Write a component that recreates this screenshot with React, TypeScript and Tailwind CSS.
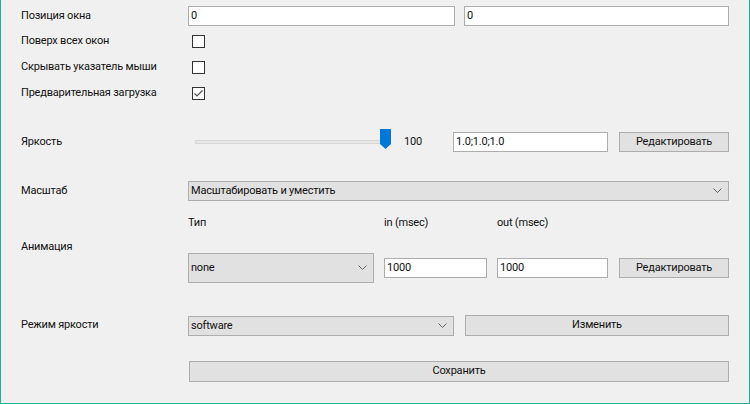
import React from 'react';

const font = { fontFamily: '"Segoe UI", Roboto, "Liberation Sans", sans-serif' };

const Chevron = () => (
  <svg width="9" height="6" viewBox="0 0 9 6" className="shrink-0">
    <path d="M0.5 0.5 L4.5 4.5 L8.5 0.5" fill="none" stroke="#606060" strokeWidth="1" />
  </svg>
);

const Check = () => (
  <svg width="11" height="11" viewBox="0 0 11 11">
    <path d="M1.5 5.5 L4 8 L9.5 2.5" fill="none" stroke="#505050" strokeWidth="1.2" />
  </svg>
);

const Checkbox = ({ checked }: { checked?: boolean }) => (
  <div className="w-[13px] h-[13px] border border-[#333333] bg-white flex items-center justify-center ml-[4px]">
    {checked && <Check />}
  </div>
);

const Input = ({ value, className }: { value: string; className: string }) => (
  <div className={`h-[20px] border border-[#adadad] bg-white flex items-center pl-[2px] ${className}`}>
    {value}
  </div>
);

const Button = ({ label, className }: { label: string; className: string }) => (
  <div className={`h-[20px] border border-[#adadad] bg-[#e1e1e1] flex items-center justify-center ${className}`}>
    {label}
  </div>
);

const Combo = ({ value, className }: { value: string; className: string }) => (
  <div className={`border border-[#adadad] bg-[#e1e1e1] flex items-center justify-between pl-[2px] pr-[6px] ${className}`}>
    <span>{value}</span>
    <Chevron />
  </div>
);

const Label = ({ text }: { text: string }) => (
  <div className="w-[167px] shrink-0">{text}</div>
);

export default function App() {
  return (
    <div
      className="w-[750px] h-[404px] bg-[#f0f0f0] border-l border-r border-b border-[#20b094] pl-[20px] pt-[6px] overflow-hidden text-[11px] tracking-[-0.2px] text-[#111]"
      style={font}
    >
      <div className="flex items-center h-[20px]">
        <Label text="Позиция окна" />
        <Input value="0" className="w-[267px]" />
        <Input value="0" className="w-[265px] ml-[9px]" />
      </div>

      <div className="flex items-center h-[26px] mt-[2px]">
        <Label text="Поверх всех окон" />
        <Checkbox />
      </div>
      <div className="flex items-center h-[26px]">
        <Label text="Скрывать указатель мыши" />
        <Checkbox />
      </div>
      <div className="flex items-center h-[26px]">
        <Label text="Предварительная загрузка" />
        <Checkbox checked />
      </div>

      <div className="flex items-center h-[20px] mt-[26px]">
        <Label text="Яркость" />
        <div className="relative w-[205px] h-[20px] flex items-center">
          <div className="ml-[7px] w-[192px] h-[4px] bg-[#e7e7e7] border border-[#d6d6d6]" />
          <svg width="11" height="20" viewBox="0 0 11 20" className="absolute left-[192px] top-[-3px]">
            <path d="M0 0 H11 V15 L5.5 20 L0 15 Z" fill="#0078d7" />
          </svg>
        </div>
        <div className="w-[60px] pl-[11px]">100</div>
        <Input value="1.0;1.0;1.0" className="w-[155px]" />
        <Button label="Редактировать" className="w-[110px] ml-[11px]" />
      </div>

      <div className="flex items-center h-[20px] mt-[29px]">
        <Label text="Масштаб" />
        <Combo value="Масштабировать и уместить" className="w-[541px] h-[20px]" />
      </div>

      <div className="flex mt-[12px]">
        <div className="w-[167px] shrink-0 pt-[26px]">Анимация</div>
        <div className="flex flex-col">
          <div className="flex items-center h-[20px]">
            <div className="w-[196px]">Тип</div>
            <div className="w-[113px]">in (msec)</div>
            <div>out (msec)</div>
          </div>
          <div className="flex items-center mt-[20px]">
            <Combo value="none" className="w-[186px] h-[30px]" />
            <Input value="1000" className="w-[103px] ml-[10px]" />
            <Input value="1000" className="w-[111px] ml-[10px]" />
            <Button label="Редактировать" className="w-[110px] ml-[11px]" />
          </div>
        </div>
      </div>

      <div className="flex items-center h-[21px] mt-[32px]">
        <Label text="Режим яркости" />
        <Combo value="software" className="w-[266px] h-[20px] mt-[1px]" />
        <Button label="Изменить" className="w-[264px] h-[21px] ml-[11px]" />
      </div>

      <div className="flex items-center h-[21px] mt-[25px]">
        <div className="w-[168px] shrink-0" />
        <Button label="Сохранить" className="w-[540px] h-[21px]" />
      </div>
    </div>
  );
}
